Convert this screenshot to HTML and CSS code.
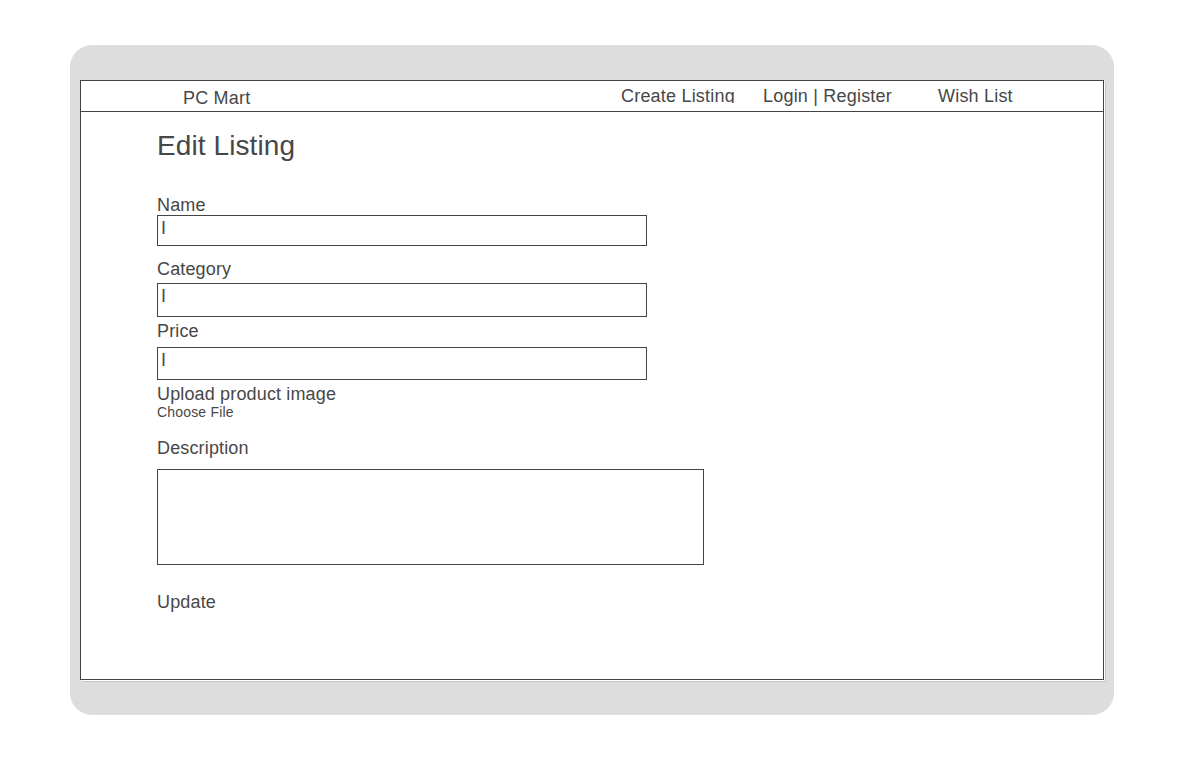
FILE: index.html
```html
<!DOCTYPE html>
<html lang="en">
<head>
<meta charset="utf-8">
<title>Edit Listing</title>
<link rel="stylesheet" href="styles.css">
</head>
<body>
<div class="frame">
  <div class="panel">
    <header class="topbar">
      <span class="brand">PC Mart</span>
      <span class="nav nav-create">Create Listing</span>
      <span class="nav nav-login">Login | Register</span>
      <span class="nav nav-wish">Wish List</span>
    </header>
    <main class="content">
      <h1 class="title">Edit Listing</h1>
      <div class="label lbl-name">Name</div>
      <div class="field fld-name">I</div>
      <div class="label lbl-category">Category</div>
      <div class="field fld-category">I</div>
      <div class="label lbl-price">Price</div>
      <div class="field fld-price">I</div>
      <div class="label lbl-upload">Upload product image</div>
      <div class="file">Choose File</div>
      <div class="label lbl-desc">Description</div>
      <div class="textarea"></div>
      <div class="label lbl-update">Update</div>
    </main>
  </div>
</div>
</body>
</html>
```

FILE: styles.css
```css
html, body {
  margin: 0;
  padding: 0;
  background: #ffffff;
}

body {
  font-family: "Liberation Sans", Arial, sans-serif;
  color: #474747;
}

.frame {
  box-sizing: border-box;
  width: 1044px;
  height: 670px;
  margin: 45px 0 0 70px;
  padding: 35px 10px 0 10px;
  background: #dddddd;
  border-radius: 22px;
}

.panel {
  box-sizing: border-box;
  width: 1024px;
  height: 600px;
  background: #ffffff;
  border: 1px solid #444444;
  box-shadow: 1px 1px 0 #ffffff, 2px 2px 0 #c4c4c4;
}

.topbar {
  box-sizing: border-box;
  display: flex;
  align-items: flex-start;
  height: 31px;
  padding: 5px 0 0 102px;
  border-bottom: 1px solid #444444;
  font-size: 18px;
  line-height: 20px;
  letter-spacing: 0.2px;
}

.brand {
  width: 438px;
  margin-top: 2px;
  flex: none;
}

.nav {
  flex: none;
}

.nav-create {
  width: 142px;
  height: 17px;
  overflow: hidden;
}

.nav-login {
  width: 175px;
}

.content {
  padding: 0 0 0 76px;
}

.title {
  margin: 18px 0 0 0;
  font-size: 28px;
  line-height: 32px;
  font-weight: normal;
  letter-spacing: 0.1px;
}

.label {
  font-size: 18px;
  line-height: 20px;
  letter-spacing: 0.15px;
}

.lbl-name { margin-top: 33px; }
.lbl-category { margin-top: 13px; }
.lbl-price { margin-top: 4px; }
.lbl-upload { margin-top: 4px; }
.lbl-desc { margin-top: 18px; }
.lbl-update { margin-top: 27px; }

.field {
  box-sizing: border-box;
  width: 490px;
  border: 1px solid #444444;
  padding: 2px 0 0 3px;
  font-size: 18px;
  line-height: 20px;
  overflow: hidden;
}

.fld-name { height: 31px; }
.fld-category { height: 34px; margin-top: 4px; }
.fld-price { height: 33px; margin-top: 6px; }

.file {
  font-size: 14px;
  line-height: 16px;
  letter-spacing: 0.18px;
}

.textarea {
  box-sizing: border-box;
  width: 547px;
  height: 96px;
  margin-top: 11px;
  border: 1px solid #444444;
}
```
